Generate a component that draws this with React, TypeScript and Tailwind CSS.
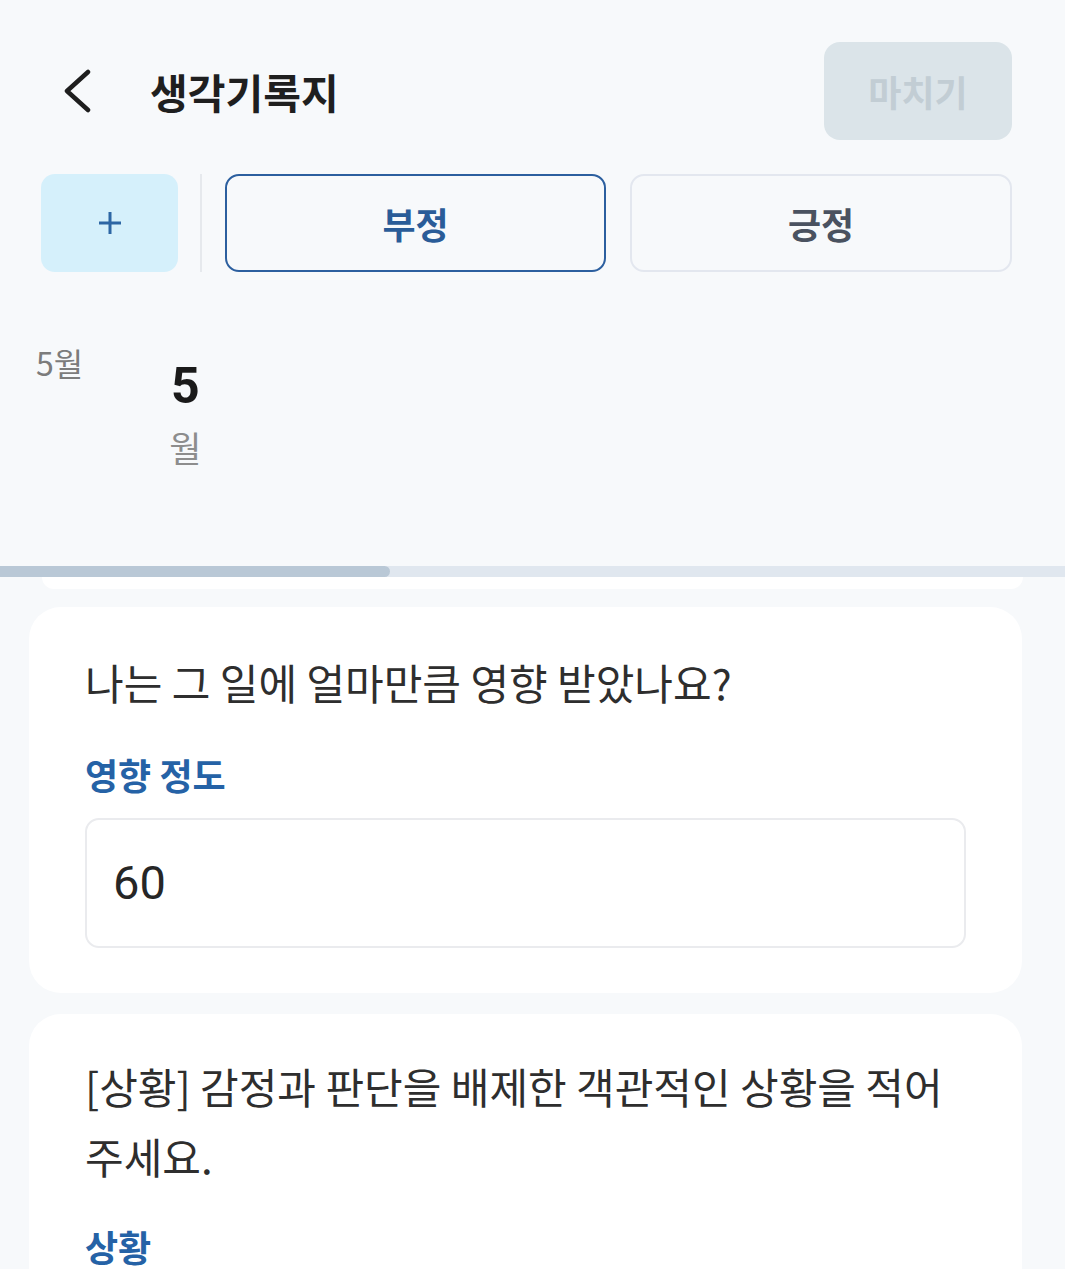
export default function App() {
  return (
    <div className="min-h-[1269px] w-full overflow-hidden bg-[#f7f9fb] font-['Noto_Sans_CJK_KR','Noto_Sans',sans-serif]">
      {/* header */}
      <header className="flex items-center justify-between pt-[42px] pl-[62px] pr-[53px]">
        <div className="flex items-center">
          <svg width="30" height="44" viewBox="0 0 30 44" fill="none">
            <path d="M26 3 L5 22 L26 41" stroke="#1e1e1e" strokeWidth="4.5" strokeLinecap="round" strokeLinejoin="round" />
          </svg>
          <h1 className="ml-[58px] text-[41px] font-bold leading-none text-[#1f1f1f]">생각기록지</h1>
        </div>
        <button className="h-[98px] w-[188px] rounded-[16px] bg-[#dbe4e9] text-[36px] font-bold text-[#c2cdd4]">마치기</button>
      </header>

      {/* type tabs */}
      <div className="mt-[34px] flex h-[98px] pl-[41px] pr-[53px]">
        <button className="flex w-[137px] items-center justify-center rounded-[14px] bg-[#d5f0fb]">
          <svg width="26" height="26" viewBox="0 0 26 26">
            <path d="M13 2 V24 M2 13 H24" stroke="#2d66a4" strokeWidth="3" />
          </svg>
        </button>
        <div className="ml-[22px] w-[2px] bg-[#e6e9ed]" />
        <button className="ml-[23px] w-[381px] rounded-[14px] border-2 border-[#2c5f9f] text-[36px] font-bold text-[#2a5c98]">부정</button>
        <button className="ml-[24px] flex-1 rounded-[14px] border-2 border-[#e3e7ef] text-[36px] font-bold text-[#4a5260]">긍정</button>
      </div>

      {/* date strip */}
      <div className="mt-[70px] flex h-[205px] pl-[36px]">
        <div className="text-[32px] leading-[40px] text-[#7c7c7c]">5월</div>
        <div className="ml-[86px] mt-[14px] flex flex-col items-center">
          <span className="font-['Roboto',sans-serif] text-[50px] font-bold leading-[60px] text-[#1a1a1a]">5</span>
          <span className="mt-[8px] text-[35px] leading-[46px] text-[#8d8d8d]">월</span>
        </div>
      </div>

      {/* scrollbar */}
      <div className="mt-[19px] h-[11px] w-full bg-[#e0e7ef]">
        <div className="h-full w-[390px] rounded-r-full bg-[#b9c8d6]" />
      </div>
      <div className="mx-[42px] h-[12px] rounded-b-[20px] bg-white" />

      {/* card 1 */}
      <section className="ml-[29px] mr-[43px] mt-[18px] rounded-[32px] bg-white px-[56px] pt-[46px] pb-[45px]">
        <p className="text-[42px] leading-[58px] text-[#2e2e2e]">나는 그 일에 얼마만큼 영향 받았나요?</p>
        <p className="mt-[39px] text-[36px] font-bold leading-[48px] text-[#2562a6]">영향 정도</p>
        <div className="mt-[20px] flex h-[130px] items-center rounded-[14px] border-2 border-[#eaebee] px-[26px]">
          <span className="font-['Roboto',sans-serif] text-[47px] text-[#262626]">60</span>
        </div>
      </section>

      {/* card 2 */}
      <section className="ml-[29px] mr-[43px] mt-[21px] rounded-[32px] bg-white px-[56px] pt-[37px] pb-[45px]">
        <p className="text-[42px] leading-[70px] text-[#2e2e2e]">
          [상황] 감정과 판단을 배제한 객관적인 상황을 적어
          <br />
          주세요.
        </p>
        <p className="mt-[31px] text-[36px] font-bold leading-[48px] text-[#2562a6]">상황</p>
      </section>
    </div>
  );
}
